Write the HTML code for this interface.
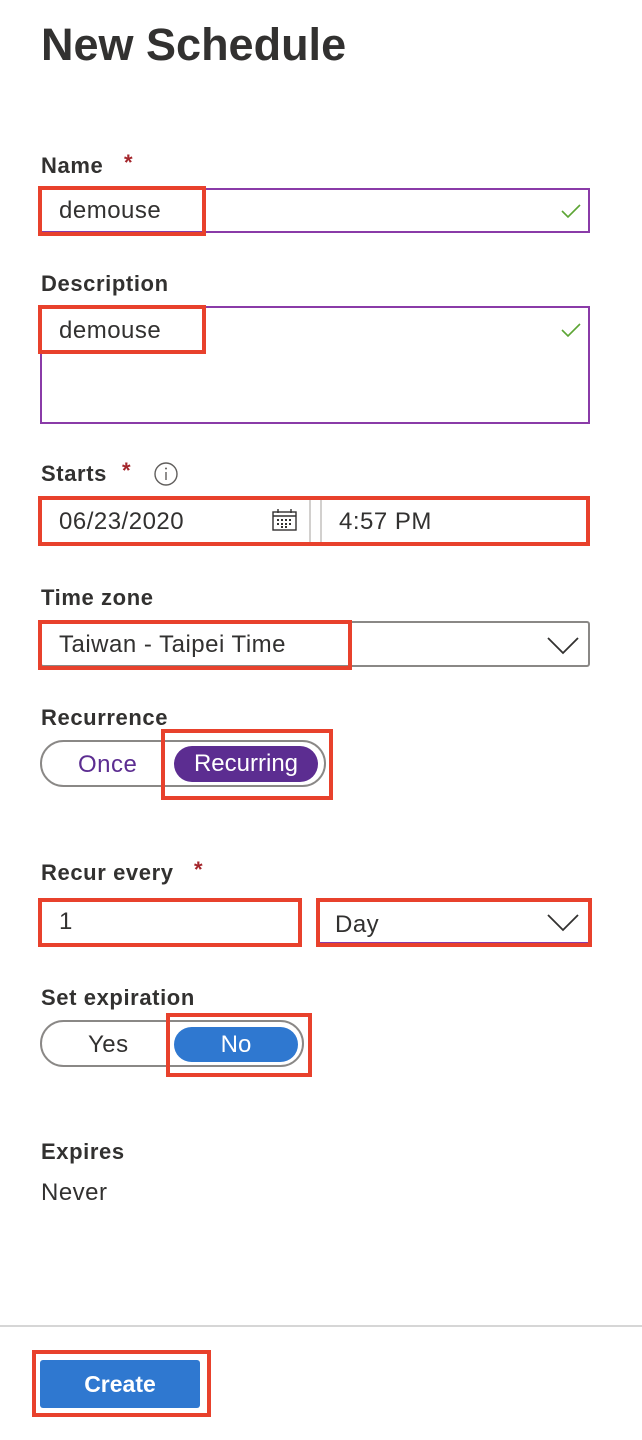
<!DOCTYPE html>
<html><head><meta charset="utf-8"><style>
body{margin:0;width:642px;height:1440px;background:#fff;position:relative;overflow:hidden;font-family:"Liberation Sans",sans-serif;color:#323130}
.a{position:absolute}
.lbl{font-size:22px;font-weight:bold;line-height:26px;letter-spacing:0.6px}
.txt{font-size:24px;line-height:28px;color:#323130;letter-spacing:0.5px}
.star{color:#a4262c;font-size:22px;font-weight:bold}
.red{position:absolute;border:4px solid #e8412c;box-sizing:border-box}
</style></head><body>
<div class="a" style="left:41px;top:20px;font-size:45px;font-weight:bold;line-height:50px;color:#323130">New Schedule</div>

<div class="a lbl" style="left:41px;top:153px">Name</div>
<div class="a star" style="left:124px;top:150px">*</div>
<div class="a" style="left:40px;top:188px;width:550px;height:45px;border:2px solid #8a3ba8;box-sizing:border-box"></div>
<div class="a txt" style="left:59px;top:197px">demouse</div>
<svg class="a" style="left:561px;top:203px" width="20" height="16"><path d="M1 8 L7 14 L19 2" fill="none" stroke="#5ca534" stroke-width="1.6"/></svg>
<div class="red" style="left:38px;top:186px;width:168px;height:50px"></div>

<div class="a lbl" style="left:41px;top:271px">Description</div>
<div class="a" style="left:40px;top:306px;width:550px;height:118px;border:2px solid #8a3ba8;box-sizing:border-box"></div>
<div class="a txt" style="left:59px;top:317px">demouse</div>
<svg class="a" style="left:561px;top:322px" width="20" height="16"><path d="M1 8 L7 14 L19 2" fill="none" stroke="#5ca534" stroke-width="1.6"/></svg>
<div class="red" style="left:38px;top:305px;width:168px;height:49px"></div>

<div class="a lbl" style="left:41px;top:461px">Starts</div>
<div class="a star" style="left:122px;top:458px">*</div>
<svg class="a" style="left:153px;top:461px" width="26" height="26"><circle cx="13" cy="13" r="11" fill="none" stroke="#605e5c" stroke-width="1.4"/><line x1="13" y1="11" x2="13" y2="19" stroke="#605e5c" stroke-width="1.4"/><circle cx="13" cy="7.5" r="1" fill="#605e5c"/></svg>
<div class="a" style="left:40px;top:498px;width:270px;height:46px;border-bottom:2px solid #c8c6c4"></div>
<div class="a" style="left:309px;top:498px;width:2px;height:46px;background:#d2d0ce"></div>
<div class="a" style="left:320px;top:498px;width:2px;height:46px;background:#d2d0ce"></div>
<div class="a txt" style="left:59px;top:508px">06/23/2020</div>
<div class="a txt" style="left:339px;top:508px">4:57 PM</div>
<svg class="a" style="left:272px;top:509px" width="25" height="22"><rect x="1" y="3" width="23" height="18" fill="none" stroke="#323130" stroke-width="1.4"/><line x1="1" y1="7" x2="24" y2="7" stroke="#323130" stroke-width="1.4"/><line x1="6" y1="0" x2="6" y2="4" stroke="#323130" stroke-width="1.4"/><line x1="19" y1="0" x2="19" y2="4" stroke="#323130" stroke-width="1.4"/><g fill="#323130"><rect x="5" y="10" width="2" height="2"/><rect x="9" y="10" width="2" height="2"/><rect x="13" y="10" width="2" height="2"/><rect x="17" y="10" width="2" height="2"/><rect x="5" y="14" width="2" height="2"/><rect x="9" y="14" width="2" height="2"/><rect x="13" y="14" width="2" height="2"/><rect x="17" y="14" width="2" height="2"/><rect x="9" y="17" width="2" height="2"/><rect x="13" y="17" width="2" height="2"/></g></svg>
<div class="red" style="left:38px;top:496px;width:552px;height:50px"></div>

<div class="a lbl" style="left:41px;top:585px">Time zone</div>
<div class="a" style="left:40px;top:621px;width:550px;height:46px;border:2px solid #8a8886;border-radius:3px;box-sizing:border-box"></div>
<div class="a txt" style="left:59px;top:631px">Taiwan - Taipei Time</div>
<svg class="a" style="left:547px;top:637px" width="32" height="18"><path d="M1 1 L16 16 L31 1" fill="none" stroke="#323130" stroke-width="1.8"/></svg>
<div class="red" style="left:38px;top:620px;width:314px;height:50px"></div>

<div class="a lbl" style="left:41px;top:705px">Recurrence</div>
<div class="a" style="left:40px;top:740px;width:286px;height:47px;border:2px solid #8a8886;border-radius:24px;box-sizing:border-box"></div>
<div class="a txt" style="left:78px;top:751px;color:#5c2d91">Once</div>
<div class="a" style="left:174px;top:746px;width:144px;height:36px;background:#5c2d91;border-radius:18px;color:#fff;font-size:24px;line-height:36px;text-align:center">Recurring</div>
<div class="red" style="left:161px;top:729px;width:172px;height:71px"></div>

<div class="a lbl" style="left:41px;top:860px">Recur every</div>
<div class="a star" style="left:194px;top:857px">*</div>
<div class="a" style="left:40px;top:900px;width:262px;height:44px;border-bottom:2px solid #c8c6c4"></div>
<div class="a" style="left:300px;top:900px;width:2px;height:44px;background:#a19f9d"></div>
<div class="a" style="left:318px;top:900px;width:272px;height:44px;border-left:2px solid #8a3ba8;border-bottom:2px solid #8a3ba8;box-sizing:border-box"></div>
<div class="a txt" style="left:59px;top:908px">1</div>
<div class="a txt" style="left:335px;top:911px">Day</div>
<svg class="a" style="left:547px;top:914px" width="32" height="18"><path d="M1 1 L16 16 L31 1" fill="none" stroke="#323130" stroke-width="1.8"/></svg>
<div class="red" style="left:38px;top:898px;width:264px;height:49px"></div>
<div class="red" style="left:316px;top:898px;width:276px;height:49px"></div>

<div class="a lbl" style="left:41px;top:985px">Set expiration</div>
<div class="a" style="left:40px;top:1020px;width:264px;height:47px;border:2px solid #8a8886;border-radius:24px;box-sizing:border-box"></div>
<div class="a txt" style="left:88px;top:1031px">Yes</div>
<div class="a" style="left:174px;top:1027px;width:124px;height:35px;background:#2f78d0;border-radius:18px;color:#fff;font-size:24px;line-height:35px;text-align:center">No</div>
<div class="red" style="left:166px;top:1013px;width:146px;height:64px"></div>

<div class="a lbl" style="left:41px;top:1139px">Expires</div>
<div class="a txt" style="left:41px;top:1179px">Never</div>

<div class="a" style="left:0;top:1325px;width:642px;height:2px;background:#d6d6d6"></div>
<div class="a" style="left:40px;top:1360px;width:160px;height:48px;background:#2f78d0;border-radius:3px;color:#fff;font-size:23px;font-weight:bold;line-height:48px;text-align:center">Create</div>
<div class="red" style="left:32px;top:1350px;width:179px;height:67px"></div>
</body></html>
